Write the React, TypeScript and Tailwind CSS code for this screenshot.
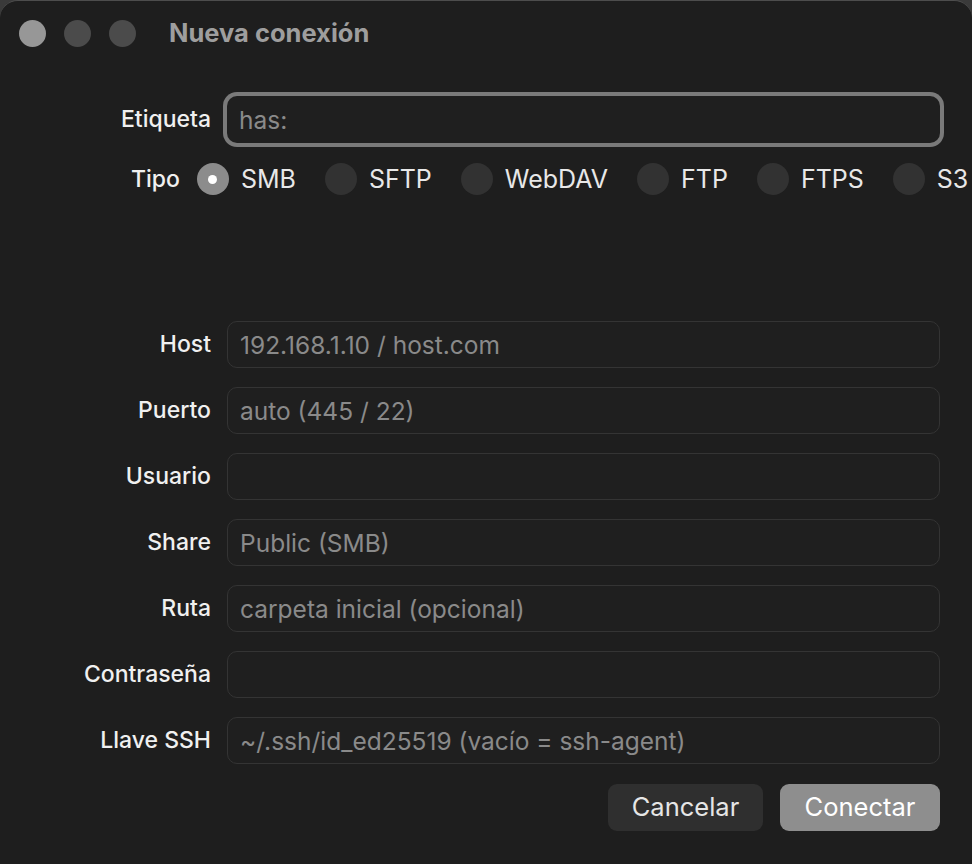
import React, { useState } from "react";

const PROTOCOLS = ["SMB", "SFTP", "WebDAV", "FTP", "FTPS", "S3"];

const FIELDS = [
  { label: "Host", placeholder: "192.168.1.10 / host.com" },
  { label: "Puerto", placeholder: "auto (445 / 22)" },
  { label: "Usuario", placeholder: "" },
  { label: "Share", placeholder: "Public (SMB)" },
  { label: "Ruta", placeholder: "carpeta inicial (opcional)" },
  { label: "Contraseña", placeholder: "", type: "password" },
  { label: "Llave SSH", placeholder: "~/.ssh/id_ed25519 (vacío = ssh-agent)" },
];

const inputBase =
  "h-[47px] flex-1 rounded-[10px] bg-[#1f1f1f] px-3 text-[24.5px] text-[#e6e6e6] placeholder:text-[#8a8a8a] outline-none";

const labelBase = "w-[211px] text-right text-[23px] font-medium text-[#f0f0f0]";

const App: React.FC = () => {
  const [tipo, setTipo] = useState("SMB");
  const [etiqueta, setEtiqueta] = useState("");

  return (
    <div
      className="h-[864px] w-[972px] overflow-hidden bg-[#3a3a3a]"
      style={{ fontFamily: "Inter, 'Noto Sans', sans-serif" }}
    >
      <div className="flex h-full flex-col rounded-t-[18px] border-t border-[#4d4d4d] bg-[#1e1e1e]">
        {/* Title bar */}
        <div className="flex h-[65px] items-center pl-[19px]">
          <div className="flex gap-[18px]">
            <span className="h-[27px] w-[27px] rounded-full bg-[#979797]" />
            <span className="h-[27px] w-[27px] rounded-full bg-[#4b4b4b]" />
            <span className="h-[27px] w-[27px] rounded-full bg-[#4b4b4b]" />
          </div>
          <div className="ml-[33px] text-[25.5px] font-bold text-[#9e9e9e]">Nueva conexión</div>
        </div>

        {/* Etiqueta */}
        <div className="mt-[30px] flex items-center pr-[32px]">
          <label className={labelBase}>Etiqueta</label>
          <input
            autoFocus
            value={etiqueta}
            onChange={(e) => setEtiqueta(e.target.value)}
            placeholder="has:"
            className={`${inputBase} ml-[16px] ring-4 ring-[#7a7a7a] caret-[#a0a0a0]`}
          />
        </div>

        {/* Tipo */}
        <div className="mt-[20px] flex h-[32px] items-center whitespace-nowrap pl-[131px]">
          <span className="text-[23px] font-medium text-[#f0f0f0]">Tipo</span>
          <div className="ml-[17px] flex items-center gap-[29px]">
            {PROTOCOLS.map((p) => (
              <button
                key={p}
                onClick={() => setTipo(p)}
                className="flex items-center gap-[12px] text-[25px] leading-none text-[#e8e8e8]"
              >
                <span
                  className={`flex h-[32px] w-[32px] items-center justify-center rounded-full ${
                    tipo === p ? "bg-[#8c8c8c]" : "bg-[#323232]"
                  }`}
                >
                  {tipo === p && <span className="h-[9px] w-[9px] rounded-full bg-white" />}
                </span>
                {p}
              </button>
            ))}
          </div>
        </div>

        {/* Connection fields */}
        <div className="mt-[126px] flex flex-col gap-[19px] pr-[32px]">
          {FIELDS.map((f) => (
            <div key={f.label} className="flex items-center">
              <label className={labelBase}>{f.label}</label>
              <input
                type={f.type ?? "text"}
                placeholder={f.placeholder}
                className={`${inputBase} ml-[16px] border border-[#343434]`}
              />
            </div>
          ))}
        </div>

        <div className="mt-[20px] flex justify-end gap-[17px] pr-[32px]">
          <button className="h-[47px] w-[155px] rounded-[9px] bg-[#2f2f2f] text-[25.5px] text-[#e6e6e6]">
            Cancelar
          </button>
          <button className="h-[47px] w-[160px] rounded-[9px] bg-[#8e8e8e] text-[25.5px] text-white">
            Conectar
          </button>
        </div>
      </div>
    </div>
  );
};

export default App;
